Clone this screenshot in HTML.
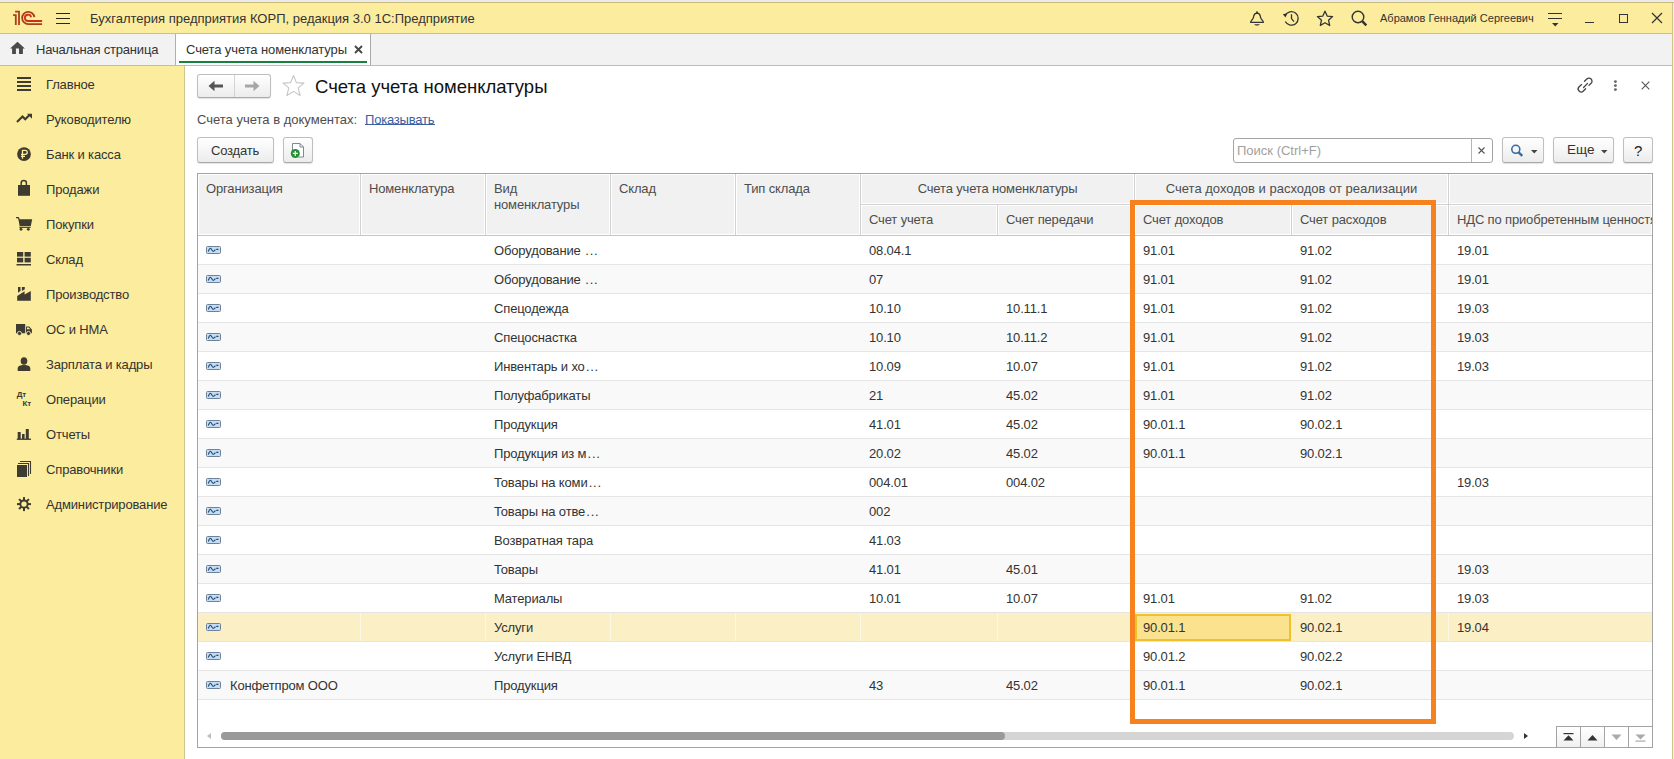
<!DOCTYPE html>
<html><head><meta charset="utf-8">
<style>
*{box-sizing:border-box;margin:0;padding:0}
html,body{width:1674px;height:759px;overflow:hidden;background:#fff;font-family:"Liberation Sans",sans-serif;color:#4d4d4d;font-size:13px}
div,span,svg{position:absolute}
.t{white-space:nowrap;line-height:16px;height:16px}
#strip{left:0;top:0;width:1674px;height:3px;background:#ebebeb;border-bottom:1px solid #c9ba7c}
#hdr{left:0;top:3px;width:1672px;height:31px;background:#fbec9e;border-bottom:1px solid #cdbf84}
#tabs{left:0;top:34px;width:1672px;height:32px;background:#f2f2f2;border-bottom:1px solid #bcbcbc}
#side{left:0;top:66px;width:185px;height:693px;background:#fbec9e;border-right:1px solid #cfc590}
#main{left:185px;top:66px;width:1487px;height:693px;background:#fff}
#redge{left:1672px;top:3px;width:1px;height:756px;background:#cfc58f}
#redge2{left:1673px;top:3px;width:1px;height:756px;background:#f4f0dc}
.side{left:46px;color:#333;font-size:13px;letter-spacing:-0.15px}
.btn{border:1px solid #bfbfbf;border-bottom-color:#a9a9a9;border-radius:3px;background:linear-gradient(#ffffff,#ececec);box-shadow:0 1px 1px rgba(0,0,0,0.12)}
.hc{background:#f2f2f2}
.hl{background:#d6d6d6;width:1px}
.hw{background:#fdfdfd;width:1px}
.cell{color:#333;font-size:13px;letter-spacing:-0.15px}
.dots{letter-spacing:0.75px;margin-left:1.2px;position:static}
.hd{color:#4d4d4d;font-size:13px;letter-spacing:-0.15px}
</style></head><body>
<div id="strip"></div>
<div id="hdr"></div>
<div id="tabs"></div>
<div id="side"></div>
<div id="main"></div>
<div id="redge"></div><div id="redge2"></div>

<svg style="left:0;top:0" width="50" height="34" viewBox="0 0 50 34">
<g fill="none" stroke-width="1.8" stroke-linecap="butt">
<path d="M13.1 15.1 H15.8 V25.1" stroke="#b33a1a"/>
<path d="M15.1 11.7 H19 V25.1" stroke="#a93f19"/>
<path d="M34.4 17.2 A6.15 6.15 0 1 0 28.3 24.1 H42.1" stroke="#a93f19"/>
<path d="M31.1 17.2 A3.15 3.15 0 1 0 28.1 21 H42.1" stroke="#cf2e1e"/>
</g></svg>
<div style="left:56px;top:13px;width:14px;height:1.3px;background:#2b2410"></div>
<div style="left:56px;top:18px;width:14px;height:1.3px;background:#2b2410"></div>
<div style="left:56px;top:23px;width:14px;height:1.3px;background:#2b2410"></div>
<div class="t" style="left:90px;top:11px;color:#333;font-size:13px">Бухгалтерия предприятия КОРП, редакция 3.0 1С:Предприятие</div>
<svg style="left:1245px;top:6px" width="24" height="22" viewBox="0 0 24 22"><path d="M5.6 16.3 H18.4 C18.4 15 16.2 13.6 15.6 11.6 C15.1 9.6 15.5 7.4 12 7.2 C8.5 7.4 8.9 9.6 8.4 11.6 C7.8 13.6 5.6 15 5.6 16.3 Z" fill="none" stroke="#333" stroke-width="1.3" stroke-linejoin="round"/><circle cx="12" cy="6.3" r="1" fill="#333"/><path d="M9.2 18.3 H14.8 C14 20 10 20 9.2 18.3 Z" fill="#333"/></svg>
<svg style="left:1282px;top:10px" width="18" height="17" viewBox="0 0 18 17"><g fill="none" stroke="#333" stroke-width="1.3">
<path d="M3.2 5.5 A6.8 6.8 0 1 1 3.3 11.5"/><path d="M9.5 4.2 V8.6 L12 11.6"/></g>
<path d="M0.8 4.2 L5.2 3.2 L3.6 7.6 Z" fill="#333"/></svg>
<svg style="left:1316px;top:10px" width="18" height="17" viewBox="0 0 18 17"><path d="M9 1.2 L11.2 6.1 L16.6 6.6 L12.5 10.2 L13.7 15.5 L9 12.7 L4.3 15.5 L5.5 10.2 L1.4 6.6 L6.8 6.1 Z" fill="none" stroke="#333" stroke-width="1.3" stroke-linejoin="round"/></svg>
<svg style="left:1351px;top:10px" width="17" height="17" viewBox="0 0 17 17"><circle cx="7" cy="7" r="5.8" fill="none" stroke="#333" stroke-width="1.4"/><path d="M11.2 11.2 L15.3 15.3" stroke="#333" stroke-width="2.4"/></svg>
<div class="t" style="left:1380px;top:10px;color:#333;font-size:11px;letter-spacing:0px">Абрамов Геннадий Сергеевич</div>
<div style="left:1548px;top:13px;width:14px;height:1.4px;background:#333"></div>
<div style="left:1548px;top:18px;width:14px;height:1.4px;background:#333"></div>
<svg style="left:1552px;top:23px" width="7" height="4" viewBox="0 0 7 4"><path d="M0 0 H6.5 L3.25 3.5 Z" fill="#333"/></svg>
<div style="left:1585px;top:22px;width:9px;height:1.2px;background:#333"></div>
<div style="left:1619px;top:14px;width:9px;height:9px;border:1.4px solid #333"></div>
<svg style="left:1651px;top:12px" width="12" height="12" viewBox="0 0 12 12"><path d="M1 1 L11 11 M11 1 L1 11" stroke="#333" stroke-width="1.2"/></svg>
<svg style="left:6px;top:38px" width="24" height="20" viewBox="6 38 24 20"><path d="M17.5 41.8 L24.9 48.6 H22.9 V53.9 H19 V48.6 H15.9 V53.9 H12.1 V48.6 H10.1 Z" fill="#4a4a4a"/></svg>
<div class="t" style="left:36px;top:42px;color:#333;font-size:13px;letter-spacing:-0.2px">Начальная страница</div>
<div style="left:175px;top:34px;width:1px;height:31px;background:#b0b0b0"></div>
<div style="left:176px;top:34px;width:194px;height:31px;background:#fff"></div>
<div style="left:370px;top:34px;width:1px;height:31px;background:#a8a8a8"></div>
<div class="t" style="left:186px;top:42px;color:#333;font-size:13px;letter-spacing:-0.1px">Счета учета номенклатуры</div>
<svg style="left:354px;top:45px" width="9" height="9" viewBox="0 0 9 9"><path d="M1 1 L8 8 M8 1 L1 8" stroke="#444" stroke-width="1.8"/></svg>
<div style="left:179px;top:61px;width:188px;height:2px;background:#17813f"></div>
<div class="t side" style="top:77px">Главное</div>
<div class="t side" style="top:112px">Руководителю</div>
<div class="t side" style="top:147px">Банк и касса</div>
<div class="t side" style="top:182px">Продажи</div>
<div class="t side" style="top:217px">Покупки</div>
<div class="t side" style="top:252px">Склад</div>
<div class="t side" style="top:287px">Производство</div>
<div class="t side" style="top:322px">ОС и НМА</div>
<div class="t side" style="top:357px">Зарплата и кадры</div>
<div class="t side" style="top:392px">Операции</div>
<div class="t side" style="top:427px">Отчеты</div>
<div class="t side" style="top:462px">Справочники</div>
<div class="t side" style="top:497px">Администрирование</div>
<svg style="left:0;top:0" width="40" height="520" viewBox="0 0 40 520"><g fill="#3e3b31">
<rect x="17" y="77" width="14" height="2"/><rect x="17" y="81" width="14" height="2"/><rect x="17" y="85" width="14" height="2"/><rect x="17" y="89" width="14" height="2"/>
<path d="M17 122 L22.5 116.5 L25.2 119.3 L29.5 115" fill="none" stroke="#3e3b31" stroke-width="2.1"/><path d="M27 113.8 H32 V118.8 Z"/>
<circle cx="24" cy="154.1" r="6.9"/>
<path d="M22.5 158.8 V150.3 H25.2 A2 2 0 0 1 25.2 154.4 H21 M21 156.3 H25" fill="none" stroke="#fbec9e" stroke-width="1.3"/>
<path d="M18 185 H20.6 V195.6 H18 Z M27 185 H30 V195.6 H18 Z"/>
<path d="M18 185 H30 V195.6 H18 Z"/>
<path d="M21.2 186.5 V183 A2.6 2.4 0 0 1 26.4 183 V186.5" fill="none" stroke="#3e3b31" stroke-width="1.5"/>
<path d="M16 217.6 H18.3 L19.3 219.5" fill="none" stroke="#3e3b31" stroke-width="1.3"/><path d="M18.4 219.3 H32.2 L30.8 226 H19.6 Z"/><rect x="19.3" y="226.7" width="11.3" height="1.2"/><circle cx="21" cy="229.3" r="1.4"/><circle cx="28.3" cy="229.3" r="1.4"/>
<rect x="17" y="252" width="6.2" height="4.6"/><rect x="24.6" y="252" width="6.2" height="4.6"/><rect x="17" y="257.8" width="6.2" height="4.6"/><rect x="24.6" y="257.8" width="6.2" height="4.6"/><rect x="16.5" y="264" width="14.5" height="1.5"/>
<path d="M17.2 300.8 V295.9 L24.6 291.2 V294.6 L30.8 290.9 V300.8 Z"/><path d="M18 287 H20.5 V291.1 L18 292.7 Z"/><path d="M21.9 287 H24.8 V289.2 L21.9 291 Z"/>
<path d="M16 324 H25.2 V333.2 H16 Z M26 326.5 H29.2 L31.9 329.5 V333.2 H26 Z"/>
<path d="M26.9 327.4 H28.7 L30.3 329.3 H26.9 Z" fill="#fbec9e"/>
<circle cx="19.5" cy="333.5" r="2.1" stroke="#fbec9e" stroke-width="0.9"/><circle cx="28.5" cy="333.5" r="2.1" stroke="#fbec9e" stroke-width="0.9"/>
<ellipse cx="24" cy="361" rx="3.3" ry="3.8"/><path d="M17.7 371 V368.5 C17.7 366 20.2 365 24 365 C27.8 365 30.3 366 30.3 368.5 V371 Z"/>
<rect x="17.7" y="432" width="3" height="7"/><rect x="22" y="434" width="2.6" height="5"/><rect x="25.8" y="429" width="3" height="10"/><rect x="16.8" y="438.6" width="14.2" height="1.3"/>
<rect x="17" y="465" width="10" height="12"/>
<path d="M18 463.5 H28.5 V476 M20 461.5 H30.5 V474" fill="none" stroke="#3e3b31" stroke-width="1.1"/>
<rect x="23" y="497.1" width="2" height="3.4" transform="rotate(0 24 504.1)"/><rect x="23" y="497.1" width="2" height="3.4" transform="rotate(45 24 504.1)"/><rect x="23" y="497.1" width="2" height="3.4" transform="rotate(90 24 504.1)"/><rect x="23" y="497.1" width="2" height="3.4" transform="rotate(135 24 504.1)"/><rect x="23" y="497.1" width="2" height="3.4" transform="rotate(180 24 504.1)"/><rect x="23" y="497.1" width="2" height="3.4" transform="rotate(225 24 504.1)"/><rect x="23" y="497.1" width="2" height="3.4" transform="rotate(270 24 504.1)"/><rect x="23" y="497.1" width="2" height="3.4" transform="rotate(315 24 504.1)"/><circle cx="24" cy="504.1" r="3.65" fill="none" stroke="#3e3b31" stroke-width="1.9"/>
</g>
<text x="16.8" y="397" font-family="Liberation Sans" font-size="8" font-weight="bold" fill="#3e3b31" letter-spacing="-0.3">Дт</text>
<text x="22.6" y="405.6" font-family="Liberation Sans" font-size="8" font-weight="bold" fill="#3e3b31" letter-spacing="-0.3">Кт</text>
</svg>
<div class="btn" style="left:197px;top:74px;width:74px;height:24px"></div>
<div style="left:234px;top:75px;width:1px;height:22px;background:#d3d3d3"></div>
<svg style="left:208px;top:80px" width="16" height="12" viewBox="0 0 16 12"><path d="M0.5 6 L6.5 0.8 V4.4 H15 V7.6 H6.5 V11.2 Z" fill="#555"/></svg>
<svg style="left:244px;top:80px" width="16" height="12" viewBox="0 0 16 12"><path d="M15.5 6 L9.5 0.8 V4.4 H1 V7.6 H9.5 V11.2 Z" fill="#a6a6a6"/></svg>
<svg style="left:281px;top:74px" width="25" height="24" viewBox="0 0 25 24"><path d="M12.5 1.5 L15.4 8.6 L23 9.1 L17.2 13.9 L19.1 21.5 L12.5 17.4 L5.9 21.5 L7.8 13.9 L2 9.1 L9.6 8.6 Z" fill="none" stroke="#c6c6c6" stroke-width="1.1" stroke-linejoin="round"/></svg>
<div class="t" style="left:315px;top:76px;color:#111;font-size:18.5px;line-height:22px;height:22px">Счета учета номенклатуры</div>
<svg style="left:1574px;top:74px" width="24" height="24" viewBox="1574 74 24 24"><g fill="none" stroke="#444" stroke-width="1.3" stroke-linecap="round"><path d="M1584.5 81.3 L1586.8 79 A3.04 3.04 0 0 1 1591.1 83.3 L1589 85.4"/><path d="M1581.6 84.6 L1579.1 86.7 A3.04 3.04 0 0 0 1583.4 91 L1585.6 88.8"/><path d="M1583.6 87.5 L1587.5 83.4"/></g></svg>
<svg style="left:1610px;top:76px" width="12" height="18" viewBox="1610 76 12 18"><g fill="#666"><circle cx="1615.4" cy="81.6" r="1.45"/><circle cx="1615.4" cy="85.6" r="1.45"/><circle cx="1615.4" cy="89.6" r="1.45"/></g></svg>
<svg style="left:1641px;top:81px" width="9" height="9" viewBox="0 0 9 9"><path d="M0.7 0.7 L8.3 8.3 M8.3 0.7 L0.7 8.3" stroke="#555" stroke-width="1.1"/></svg>
<div class="t" style="left:197px;top:112px;color:#4d4d4d;letter-spacing:0px">Счета учета в документах:</div>
<div class="t" style="left:365px;top:112px;color:#3b5f9f;letter-spacing:-0.2px">Показывать</div>
<div style="left:365px;top:124px;width:70px;height:1px;background:#3b5f9f"></div>
<div class="btn" style="left:197px;top:137px;width:77px;height:26px"></div>
<div class="t" style="left:211px;top:143px;color:#333;letter-spacing:-0.2px">Создать</div>
<div class="btn" style="left:283px;top:137px;width:30px;height:26px"></div>
<svg style="left:289px;top:142px" width="17" height="17" viewBox="0 0 17 17"><path d="M3.5 1.5 H11 L14.5 5 V15 H3.5 Z" fill="#fff" stroke="#7a8a96" stroke-width="1"/><path d="M11 1.5 V5 H14.5" fill="none" stroke="#7a8a96" stroke-width="1"/><circle cx="6.3" cy="11.4" r="4.5" fill="#23902f"/><path d="M6.3 8.9 V13.9 M3.8 11.4 H8.8" stroke="#fff" stroke-width="1.2"/></svg>
<div style="left:1233px;top:138px;width:260px;height:25px;border:1px solid #a5a5a5;border-radius:3px;background:#fff"></div>
<div style="left:1471px;top:139px;width:1px;height:23px;background:#b5b5b5"></div>
<div class="t" style="left:1237px;top:143px;color:#a0a0a0">Поиск (Ctrl+F)</div>
<svg style="left:1478px;top:147px" width="7" height="7" viewBox="0 0 7 7"><path d="M0.5 0.5 L6.5 6.5 M6.5 0.5 L0.5 6.5" stroke="#555" stroke-width="1.1"/></svg>
<div class="btn" style="left:1502px;top:137px;width:42px;height:26px"></div>
<svg style="left:1510px;top:144px" width="14" height="13" viewBox="0 0 14 13"><circle cx="5.8" cy="5.3" r="4" fill="none" stroke="#336aa3" stroke-width="1.6"/><path d="M8.6 8.3 L12.3 11.8" stroke="#336aa3" stroke-width="2.3"/></svg>
<svg style="left:1531px;top:150px" width="7" height="4" viewBox="0 0 7 4"><path d="M0 0 H6.5 L3.25 3.5 Z" fill="#444"/></svg>
<div class="btn" style="left:1553px;top:137px;width:61px;height:26px"></div>
<div class="t" style="left:1567px;top:142px;color:#333;font-size:13.5px">Еще</div>
<svg style="left:1601px;top:150px" width="7" height="4" viewBox="0 0 7 4"><path d="M0 0 H6.5 L3.25 3.5 Z" fill="#444"/></svg>
<div class="btn" style="left:1623px;top:137px;width:30px;height:26px"></div>
<div class="t" style="left:1634px;top:142px;color:#222;font-size:15px;line-height:17px">?</div>
<div style="left:197px;top:173px;width:1456px;height:575px;border:1px solid #a3a3a3;background:#fff"></div>
<div style="left:198px;top:174px;width:1454px;height:61px;background:#d2d2d2"></div>
<div style="left:198px;top:235px;width:1454px;height:1px;background:#c6c6c6"></div>
<div style="left:198px;top:174px;width:162px;height:61px;background:#f1f1f1;border:1px solid #fff"></div>
<div style="left:361px;top:174px;width:124px;height:61px;background:#f1f1f1;border:1px solid #fff"></div>
<div style="left:486px;top:174px;width:124px;height:61px;background:#f1f1f1;border:1px solid #fff"></div>
<div style="left:611px;top:174px;width:124px;height:61px;background:#f1f1f1;border:1px solid #fff"></div>
<div style="left:736px;top:174px;width:124px;height:61px;background:#f1f1f1;border:1px solid #fff"></div>
<div style="left:861px;top:174px;width:273px;height:30px;background:#f1f1f1;border:1px solid #fff"></div>
<div style="left:861px;top:205px;width:136px;height:30px;background:#f1f1f1;border:1px solid #fff"></div>
<div style="left:998px;top:205px;width:136px;height:30px;background:#f1f1f1;border:1px solid #fff"></div>
<div style="left:1135px;top:174px;width:313px;height:30px;background:#f1f1f1;border:1px solid #fff"></div>
<div style="left:1135px;top:205px;width:156px;height:30px;background:#f1f1f1;border:1px solid #fff"></div>
<div style="left:1292px;top:205px;width:156px;height:30px;background:#f1f1f1;border:1px solid #fff"></div>
<div style="left:1449px;top:174px;width:203px;height:30px;background:#f1f1f1;border:1px solid #fff"></div>
<div style="left:1449px;top:205px;width:203px;height:30px;background:#f1f1f1;border:1px solid #fff"></div>
<div class="t hd" style="left:206px;top:181px">Организация</div>
<div class="t hd" style="left:369px;top:181px">Номенклатура</div>
<div class="t hd" style="left:494px;top:181px">Вид</div>
<div class="t hd" style="left:494px;top:197px">номенклатуры</div>
<div class="t hd" style="left:619px;top:181px">Склад</div>
<div class="t hd" style="left:744px;top:181px">Тип склада</div>
<div class="t hd" style="left:869px;top:212px">Счет учета</div>
<div class="t hd" style="left:1006px;top:212px">Счет передачи</div>
<div class="t hd" style="left:1143px;top:212px">Счет доходов</div>
<div class="t hd" style="left:1300px;top:212px">Счет расходов</div>
<div class="t hd" style="left:1457px;top:212px">НДС по приобретенным ценностям</div>
<div class="t hd" style="left:861px;top:181px;width:273px;text-align:center">Счета учета номенклатуры</div>
<div class="t hd" style="left:1135px;top:181px;width:313px;text-align:center;letter-spacing:0">Счета доходов и расходов от реализации</div>
<div style="left:1652px;top:173px;width:20px;height:63px;background:#fff;border-left:1px solid #a3a3a3"></div>
<div style="left:198px;top:236px;width:1454px;height:29px;background:#ffffff;border-bottom:1px solid #e5e5e5"></div>
<svg style="left:206px;top:246px" width="15" height="8" viewBox="0 0 15 8"><rect x="0.5" y="0.5" width="14" height="7" rx="1" fill="#c4ddf4" stroke="#6e8297" stroke-width="1"/><path d="M2.3 5.5 C2.8 4 3.5 2.3 4.5 2.3 C5.5 2.3 6 5.3 7 5.3 C8 5.3 8.5 4.2 9.5 3.8 M10.3 3.4 H12.4" fill="none" stroke="#1d466f" stroke-width="1.1"/></svg>
<div class="t cell" style="left:494px;top:243px">Оборудование <span class="dots">...</span></div>
<div class="t cell" style="left:869px;top:243px">08.04.1</div>
<div class="t cell" style="left:1143px;top:243px">91.01</div>
<div class="t cell" style="left:1300px;top:243px">91.02</div>
<div class="t cell" style="left:1457px;top:243px">19.01</div>
<div style="left:198px;top:265px;width:1454px;height:29px;background:#f9f9f9;border-bottom:1px solid #e5e5e5"></div>
<svg style="left:206px;top:275px" width="15" height="8" viewBox="0 0 15 8"><rect x="0.5" y="0.5" width="14" height="7" rx="1" fill="#c4ddf4" stroke="#6e8297" stroke-width="1"/><path d="M2.3 5.5 C2.8 4 3.5 2.3 4.5 2.3 C5.5 2.3 6 5.3 7 5.3 C8 5.3 8.5 4.2 9.5 3.8 M10.3 3.4 H12.4" fill="none" stroke="#1d466f" stroke-width="1.1"/></svg>
<div class="t cell" style="left:494px;top:272px">Оборудование <span class="dots">...</span></div>
<div class="t cell" style="left:869px;top:272px">07</div>
<div class="t cell" style="left:1143px;top:272px">91.01</div>
<div class="t cell" style="left:1300px;top:272px">91.02</div>
<div class="t cell" style="left:1457px;top:272px">19.01</div>
<div style="left:198px;top:294px;width:1454px;height:29px;background:#ffffff;border-bottom:1px solid #e5e5e5"></div>
<svg style="left:206px;top:304px" width="15" height="8" viewBox="0 0 15 8"><rect x="0.5" y="0.5" width="14" height="7" rx="1" fill="#c4ddf4" stroke="#6e8297" stroke-width="1"/><path d="M2.3 5.5 C2.8 4 3.5 2.3 4.5 2.3 C5.5 2.3 6 5.3 7 5.3 C8 5.3 8.5 4.2 9.5 3.8 M10.3 3.4 H12.4" fill="none" stroke="#1d466f" stroke-width="1.1"/></svg>
<div class="t cell" style="left:494px;top:301px">Спецодежда</div>
<div class="t cell" style="left:869px;top:301px">10.10</div>
<div class="t cell" style="left:1006px;top:301px">10.11.1</div>
<div class="t cell" style="left:1143px;top:301px">91.01</div>
<div class="t cell" style="left:1300px;top:301px">91.02</div>
<div class="t cell" style="left:1457px;top:301px">19.03</div>
<div style="left:198px;top:323px;width:1454px;height:29px;background:#f9f9f9;border-bottom:1px solid #e5e5e5"></div>
<svg style="left:206px;top:333px" width="15" height="8" viewBox="0 0 15 8"><rect x="0.5" y="0.5" width="14" height="7" rx="1" fill="#c4ddf4" stroke="#6e8297" stroke-width="1"/><path d="M2.3 5.5 C2.8 4 3.5 2.3 4.5 2.3 C5.5 2.3 6 5.3 7 5.3 C8 5.3 8.5 4.2 9.5 3.8 M10.3 3.4 H12.4" fill="none" stroke="#1d466f" stroke-width="1.1"/></svg>
<div class="t cell" style="left:494px;top:330px">Спецоснастка</div>
<div class="t cell" style="left:869px;top:330px">10.10</div>
<div class="t cell" style="left:1006px;top:330px">10.11.2</div>
<div class="t cell" style="left:1143px;top:330px">91.01</div>
<div class="t cell" style="left:1300px;top:330px">91.02</div>
<div class="t cell" style="left:1457px;top:330px">19.03</div>
<div style="left:198px;top:352px;width:1454px;height:29px;background:#ffffff;border-bottom:1px solid #e5e5e5"></div>
<svg style="left:206px;top:362px" width="15" height="8" viewBox="0 0 15 8"><rect x="0.5" y="0.5" width="14" height="7" rx="1" fill="#c4ddf4" stroke="#6e8297" stroke-width="1"/><path d="M2.3 5.5 C2.8 4 3.5 2.3 4.5 2.3 C5.5 2.3 6 5.3 7 5.3 C8 5.3 8.5 4.2 9.5 3.8 M10.3 3.4 H12.4" fill="none" stroke="#1d466f" stroke-width="1.1"/></svg>
<div class="t cell" style="left:494px;top:359px">Инвентарь и хо<span class="dots">...</span></div>
<div class="t cell" style="left:869px;top:359px">10.09</div>
<div class="t cell" style="left:1006px;top:359px">10.07</div>
<div class="t cell" style="left:1143px;top:359px">91.01</div>
<div class="t cell" style="left:1300px;top:359px">91.02</div>
<div class="t cell" style="left:1457px;top:359px">19.03</div>
<div style="left:198px;top:381px;width:1454px;height:29px;background:#f9f9f9;border-bottom:1px solid #e5e5e5"></div>
<svg style="left:206px;top:391px" width="15" height="8" viewBox="0 0 15 8"><rect x="0.5" y="0.5" width="14" height="7" rx="1" fill="#c4ddf4" stroke="#6e8297" stroke-width="1"/><path d="M2.3 5.5 C2.8 4 3.5 2.3 4.5 2.3 C5.5 2.3 6 5.3 7 5.3 C8 5.3 8.5 4.2 9.5 3.8 M10.3 3.4 H12.4" fill="none" stroke="#1d466f" stroke-width="1.1"/></svg>
<div class="t cell" style="left:494px;top:388px">Полуфабрикаты</div>
<div class="t cell" style="left:869px;top:388px">21</div>
<div class="t cell" style="left:1006px;top:388px">45.02</div>
<div class="t cell" style="left:1143px;top:388px">91.01</div>
<div class="t cell" style="left:1300px;top:388px">91.02</div>
<div style="left:198px;top:410px;width:1454px;height:29px;background:#ffffff;border-bottom:1px solid #e5e5e5"></div>
<svg style="left:206px;top:420px" width="15" height="8" viewBox="0 0 15 8"><rect x="0.5" y="0.5" width="14" height="7" rx="1" fill="#c4ddf4" stroke="#6e8297" stroke-width="1"/><path d="M2.3 5.5 C2.8 4 3.5 2.3 4.5 2.3 C5.5 2.3 6 5.3 7 5.3 C8 5.3 8.5 4.2 9.5 3.8 M10.3 3.4 H12.4" fill="none" stroke="#1d466f" stroke-width="1.1"/></svg>
<div class="t cell" style="left:494px;top:417px">Продукция</div>
<div class="t cell" style="left:869px;top:417px">41.01</div>
<div class="t cell" style="left:1006px;top:417px">45.02</div>
<div class="t cell" style="left:1143px;top:417px">90.01.1</div>
<div class="t cell" style="left:1300px;top:417px">90.02.1</div>
<div style="left:198px;top:439px;width:1454px;height:29px;background:#f9f9f9;border-bottom:1px solid #e5e5e5"></div>
<svg style="left:206px;top:449px" width="15" height="8" viewBox="0 0 15 8"><rect x="0.5" y="0.5" width="14" height="7" rx="1" fill="#c4ddf4" stroke="#6e8297" stroke-width="1"/><path d="M2.3 5.5 C2.8 4 3.5 2.3 4.5 2.3 C5.5 2.3 6 5.3 7 5.3 C8 5.3 8.5 4.2 9.5 3.8 M10.3 3.4 H12.4" fill="none" stroke="#1d466f" stroke-width="1.1"/></svg>
<div class="t cell" style="left:494px;top:446px">Продукция из м<span class="dots">...</span></div>
<div class="t cell" style="left:869px;top:446px">20.02</div>
<div class="t cell" style="left:1006px;top:446px">45.02</div>
<div class="t cell" style="left:1143px;top:446px">90.01.1</div>
<div class="t cell" style="left:1300px;top:446px">90.02.1</div>
<div style="left:198px;top:468px;width:1454px;height:29px;background:#ffffff;border-bottom:1px solid #e5e5e5"></div>
<svg style="left:206px;top:478px" width="15" height="8" viewBox="0 0 15 8"><rect x="0.5" y="0.5" width="14" height="7" rx="1" fill="#c4ddf4" stroke="#6e8297" stroke-width="1"/><path d="M2.3 5.5 C2.8 4 3.5 2.3 4.5 2.3 C5.5 2.3 6 5.3 7 5.3 C8 5.3 8.5 4.2 9.5 3.8 M10.3 3.4 H12.4" fill="none" stroke="#1d466f" stroke-width="1.1"/></svg>
<div class="t cell" style="left:494px;top:475px">Товары на коми<span class="dots">...</span></div>
<div class="t cell" style="left:869px;top:475px">004.01</div>
<div class="t cell" style="left:1006px;top:475px">004.02</div>
<div class="t cell" style="left:1457px;top:475px">19.03</div>
<div style="left:198px;top:497px;width:1454px;height:29px;background:#f9f9f9;border-bottom:1px solid #e5e5e5"></div>
<svg style="left:206px;top:507px" width="15" height="8" viewBox="0 0 15 8"><rect x="0.5" y="0.5" width="14" height="7" rx="1" fill="#c4ddf4" stroke="#6e8297" stroke-width="1"/><path d="M2.3 5.5 C2.8 4 3.5 2.3 4.5 2.3 C5.5 2.3 6 5.3 7 5.3 C8 5.3 8.5 4.2 9.5 3.8 M10.3 3.4 H12.4" fill="none" stroke="#1d466f" stroke-width="1.1"/></svg>
<div class="t cell" style="left:494px;top:504px">Товары на отве<span class="dots">...</span></div>
<div class="t cell" style="left:869px;top:504px">002</div>
<div style="left:198px;top:526px;width:1454px;height:29px;background:#ffffff;border-bottom:1px solid #e5e5e5"></div>
<svg style="left:206px;top:536px" width="15" height="8" viewBox="0 0 15 8"><rect x="0.5" y="0.5" width="14" height="7" rx="1" fill="#c4ddf4" stroke="#6e8297" stroke-width="1"/><path d="M2.3 5.5 C2.8 4 3.5 2.3 4.5 2.3 C5.5 2.3 6 5.3 7 5.3 C8 5.3 8.5 4.2 9.5 3.8 M10.3 3.4 H12.4" fill="none" stroke="#1d466f" stroke-width="1.1"/></svg>
<div class="t cell" style="left:494px;top:533px">Возвратная тара</div>
<div class="t cell" style="left:869px;top:533px">41.03</div>
<div style="left:198px;top:555px;width:1454px;height:29px;background:#f9f9f9;border-bottom:1px solid #e5e5e5"></div>
<svg style="left:206px;top:565px" width="15" height="8" viewBox="0 0 15 8"><rect x="0.5" y="0.5" width="14" height="7" rx="1" fill="#c4ddf4" stroke="#6e8297" stroke-width="1"/><path d="M2.3 5.5 C2.8 4 3.5 2.3 4.5 2.3 C5.5 2.3 6 5.3 7 5.3 C8 5.3 8.5 4.2 9.5 3.8 M10.3 3.4 H12.4" fill="none" stroke="#1d466f" stroke-width="1.1"/></svg>
<div class="t cell" style="left:494px;top:562px">Товары</div>
<div class="t cell" style="left:869px;top:562px">41.01</div>
<div class="t cell" style="left:1006px;top:562px">45.01</div>
<div class="t cell" style="left:1457px;top:562px">19.03</div>
<div style="left:198px;top:584px;width:1454px;height:29px;background:#ffffff;border-bottom:1px solid #e5e5e5"></div>
<svg style="left:206px;top:594px" width="15" height="8" viewBox="0 0 15 8"><rect x="0.5" y="0.5" width="14" height="7" rx="1" fill="#c4ddf4" stroke="#6e8297" stroke-width="1"/><path d="M2.3 5.5 C2.8 4 3.5 2.3 4.5 2.3 C5.5 2.3 6 5.3 7 5.3 C8 5.3 8.5 4.2 9.5 3.8 M10.3 3.4 H12.4" fill="none" stroke="#1d466f" stroke-width="1.1"/></svg>
<div class="t cell" style="left:494px;top:591px">Материалы</div>
<div class="t cell" style="left:869px;top:591px">10.01</div>
<div class="t cell" style="left:1006px;top:591px">10.07</div>
<div class="t cell" style="left:1143px;top:591px">91.01</div>
<div class="t cell" style="left:1300px;top:591px">91.02</div>
<div class="t cell" style="left:1457px;top:591px">19.03</div>
<div style="left:198px;top:613px;width:1454px;height:29px;background:#fbf0c5;border-bottom:1px solid #e5e5e5"></div>
<div style="left:360px;top:613px;width:1px;height:28px;background:#fdf8e6"></div>
<div style="left:485px;top:613px;width:1px;height:28px;background:#fdf8e6"></div>
<div style="left:610px;top:613px;width:1px;height:28px;background:#fdf8e6"></div>
<div style="left:735px;top:613px;width:1px;height:28px;background:#fdf8e6"></div>
<div style="left:860px;top:613px;width:1px;height:28px;background:#fdf8e6"></div>
<div style="left:997px;top:613px;width:1px;height:28px;background:#fdf8e6"></div>
<div style="left:1448px;top:613px;width:1px;height:28px;background:#fdf8e6"></div>
<div style="left:1135px;top:614px;width:156px;height:27px;background:#fbe28f;border:2px solid #f1c12b"></div>
<svg style="left:206px;top:623px" width="15" height="8" viewBox="0 0 15 8"><rect x="0.5" y="0.5" width="14" height="7" rx="1" fill="#c4ddf4" stroke="#6e8297" stroke-width="1"/><path d="M2.3 5.5 C2.8 4 3.5 2.3 4.5 2.3 C5.5 2.3 6 5.3 7 5.3 C8 5.3 8.5 4.2 9.5 3.8 M10.3 3.4 H12.4" fill="none" stroke="#1d466f" stroke-width="1.1"/></svg>
<div class="t cell" style="left:494px;top:620px">Услуги</div>
<div class="t cell" style="left:1143px;top:620px">90.01.1</div>
<div class="t cell" style="left:1300px;top:620px">90.02.1</div>
<div class="t cell" style="left:1457px;top:620px">19.04</div>
<div style="left:198px;top:642px;width:1454px;height:29px;background:#ffffff;border-bottom:1px solid #e5e5e5"></div>
<svg style="left:206px;top:652px" width="15" height="8" viewBox="0 0 15 8"><rect x="0.5" y="0.5" width="14" height="7" rx="1" fill="#c4ddf4" stroke="#6e8297" stroke-width="1"/><path d="M2.3 5.5 C2.8 4 3.5 2.3 4.5 2.3 C5.5 2.3 6 5.3 7 5.3 C8 5.3 8.5 4.2 9.5 3.8 M10.3 3.4 H12.4" fill="none" stroke="#1d466f" stroke-width="1.1"/></svg>
<div class="t cell" style="left:494px;top:649px">Услуги ЕНВД</div>
<div class="t cell" style="left:1143px;top:649px">90.01.2</div>
<div class="t cell" style="left:1300px;top:649px">90.02.2</div>
<div style="left:198px;top:671px;width:1454px;height:29px;background:#f9f9f9;border-bottom:1px solid #e5e5e5"></div>
<svg style="left:206px;top:681px" width="15" height="8" viewBox="0 0 15 8"><rect x="0.5" y="0.5" width="14" height="7" rx="1" fill="#c4ddf4" stroke="#6e8297" stroke-width="1"/><path d="M2.3 5.5 C2.8 4 3.5 2.3 4.5 2.3 C5.5 2.3 6 5.3 7 5.3 C8 5.3 8.5 4.2 9.5 3.8 M10.3 3.4 H12.4" fill="none" stroke="#1d466f" stroke-width="1.1"/></svg>
<div class="t cell" style="left:230px;top:678px">Конфетпром ООО</div>
<div class="t cell" style="left:494px;top:678px">Продукция</div>
<div class="t cell" style="left:869px;top:678px">43</div>
<div class="t cell" style="left:1006px;top:678px">45.02</div>
<div class="t cell" style="left:1143px;top:678px">90.01.1</div>
<div class="t cell" style="left:1300px;top:678px">90.02.1</div>
<svg style="left:207px;top:733px" width="4" height="6" viewBox="0 0 4 6"><path d="M0 3 L4 0 V6 Z" fill="#bdbdbd"/></svg>
<div style="left:221px;top:732px;width:1293px;height:8px;border-radius:4px;background:#d5d5d5"></div>
<div style="left:221px;top:732px;width:784px;height:8px;border-radius:4px;background:#999"></div>
<svg style="left:1524px;top:733px" width="4" height="6" viewBox="0 0 4 6"><path d="M4 3 L0 0 V6 Z" fill="#333"/></svg>
<div style="left:1556px;top:726px;width:97px;height:22px;border:1px solid #a3a3a3;background:#fff"></div>
<div style="left:1557px;top:727px;width:23px;height:20px;background:linear-gradient(#fff,#f0f0f0)"></div>
<div style="left:1581px;top:727px;width:23px;height:20px;background:linear-gradient(#fff,#f0f0f0)"></div>
<div style="left:1605px;top:727px;width:23px;height:20px;background:#fff"></div>
<div style="left:1629px;top:727px;width:23px;height:20px;background:#fff"></div>
<div style="left:1580px;top:727px;width:1px;height:20px;background:#a3a3a3"></div>
<div style="left:1604px;top:727px;width:1px;height:20px;background:#a3a3a3"></div>
<div style="left:1628px;top:727px;width:1px;height:20px;background:#a3a3a3"></div>
<svg style="left:1563px;top:733px" width="11" height="8" viewBox="0 0 11 8"><rect x="0.5" y="0" width="10" height="1.2" fill="#333"/><path d="M0.5 7.5 L5.5 2.3 L10.5 7.5 Z" fill="#333"/></svg>
<svg style="left:1587px;top:734px" width="11" height="7" viewBox="0 0 11 7"><path d="M0.5 6.5 L5.5 1 L10.5 6.5 Z" fill="#333"/></svg>
<svg style="left:1611px;top:734px" width="11" height="7" viewBox="0 0 11 7"><path d="M0.5 0.5 L5.5 6 L10.5 0.5 Z" fill="#aaa"/></svg>
<svg style="left:1635px;top:734px" width="11" height="8" viewBox="0 0 11 8"><path d="M0.5 0.5 L5.5 5.5 L10.5 0.5 Z" fill="#aaa"/><rect x="0.5" y="6.5" width="10" height="1.2" fill="#aaa"/></svg>
<div style="left:1130px;top:200px;width:306px;height:524px;border:5px solid #f5821f"></div>
</body></html>
